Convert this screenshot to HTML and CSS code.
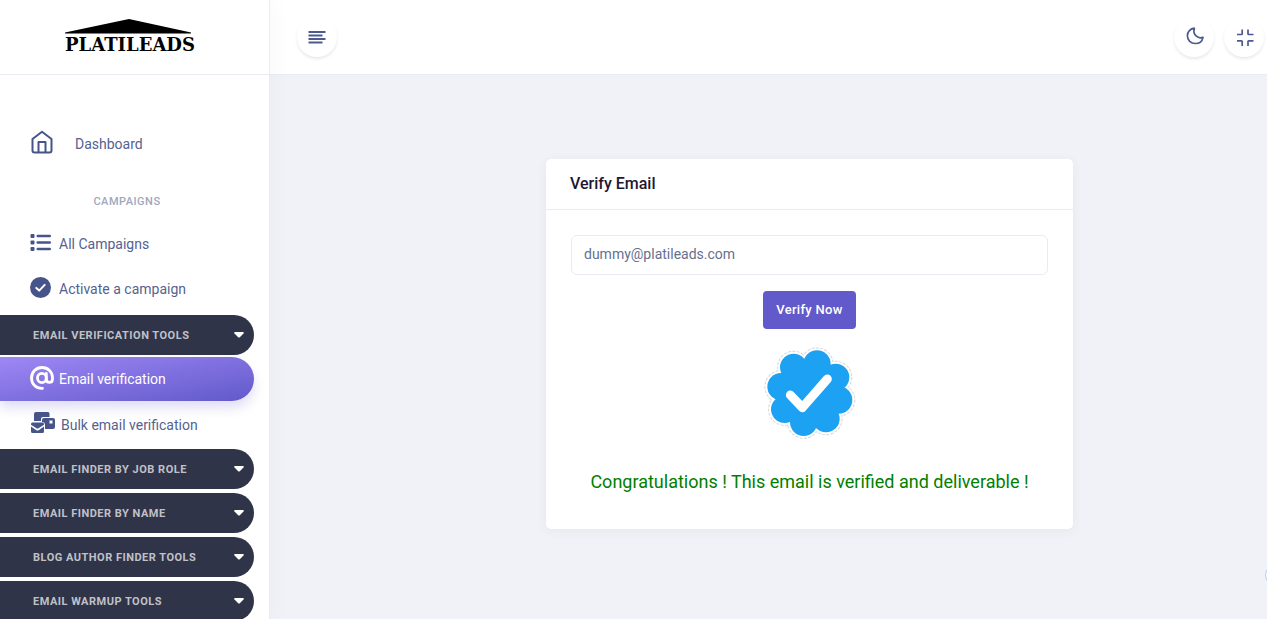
FILE: index.html
```html
<!DOCTYPE html>
<html lang="en">
<head>
<meta charset="utf-8">
<meta name="viewport" content="width=device-width, initial-scale=1">
<title>Platileads - Verify Email</title>
<link rel="stylesheet" href="styles.css">
</head>
<body>
<div class="app">
  <aside class="sidebar">
    <a class="brand" href="#">
      <svg class="brand-roof" viewBox="0 0 126 15" aria-hidden="true"><path d="M0 14.5V13.4L64 0L126 13.4V14.5Z"/></svg>
      <span class="brand-name">PLATILEADS</span>
    </a>
    <nav class="menu">
      <a class="item item-home" href="#">
        <svg class="icon-home" viewBox="0 0 24 24" fill="none" stroke="currentColor" stroke-width="2" stroke-linejoin="round"><path d="M2.500 9L12 1.800L21.500 9V20.500Q21.500 22.500 19.500 22.500H4.500Q2.500 22.500 2.500 20.500Z"/><path d="M8.500 22V12H15.500V22"/></svg>
        <span>Dashboard</span>
      </a>
      <h2 class="menu-title">CAMPAIGNS</h2>
      <a class="item" href="#">
        <svg class="icon-row" viewBox="0 0 21 21" fill="currentColor"><rect x="0.500" y="2" width="4" height="4" rx="1"/><rect x="0.500" y="8.500" width="4" height="4" rx="1"/><rect x="0.500" y="15" width="4" height="4" rx="1"/><rect x="6.500" y="2.800" width="14.500" height="2.400" rx="1.200"/><rect x="6.500" y="9.300" width="14.500" height="2.400" rx="1.200"/><rect x="6.500" y="15.800" width="14.500" height="2.400" rx="1.200"/></svg>
        <span>All Campaigns</span>
      </a>
      <a class="item" href="#">
        <svg class="icon-row" viewBox="0 0 21 21"><circle cx="10.500" cy="10.500" r="10.500" fill="currentColor"/><path d="M6.300 10.900L9.200 13.600L14.700 7.900" fill="none" stroke="#fff" stroke-width="2" stroke-linecap="round" stroke-linejoin="round"/></svg>
        <span>Activate a campaign</span>
      </a>
      <button class="group group-open" type="button"><span>EMAIL VERIFICATION TOOLS</span><svg class="caret" viewBox="0 0 10 6"><path d="M1 0H9Q10.300 .4 9.500 1.400L5.800 5.200Q5 6 4.200 5.200L.5 1.400Q-.3 .4 1 0Z"/></svg></button>
      <a class="item item-active" href="#">
        <svg class="icon-at" viewBox="0 0 24 24" fill="none" stroke="currentColor" stroke-width="2.800" stroke-linecap="round"><path d="M12.500 22.300C6 22.700 1.500 18 1.500 12S6 1.500 12 1.500S22.500 6 22.500 11.500V13C22.500 17.600 16.300 17.600 16.300 13V7.500"/><ellipse cx="11.900" cy="12" rx="4.400" ry="4.600"/></svg>
        <span>Email verification</span>
      </a>
      <a class="item item-bulk" href="#">
        <svg class="icon-mail" viewBox="0 0 24 22" fill="currentColor"><path d="M3 9V2Q3 0 5 0H17Q18.500 0 18.500 2V5H12Q10 5 10 7V9Z"/><path fill-rule="evenodd" d="M11 8Q11 6 13 6H22Q24 6 24 8V15Q24 17 22 17H14V13Q14 10 11 10ZM18.500 8.500V11.500H21.500V8.500Z"/><path d="M0 12Q0 10.500 1.500 10.500H11.500Q13 10.500 13 12V12.700L7.500 16.300Q6.500 17 5.500 16.300L0 12.700Z"/><path d="M0 14.600L5 18Q6.500 19 8 18L13 14.600V19.500Q13 21 11.500 21H1.500Q0 21 0 19.500Z"/></svg>
        <span>Bulk email verification</span>
      </a>
      <button class="group" type="button"><span>EMAIL FINDER BY JOB ROLE</span><svg class="caret" viewBox="0 0 10 6"><path d="M1 0H9Q10.300 .4 9.500 1.400L5.800 5.200Q5 6 4.200 5.200L.5 1.400Q-.3 .4 1 0Z"/></svg></button>
      <button class="group" type="button"><span>EMAIL FINDER BY NAME</span><svg class="caret" viewBox="0 0 10 6"><path d="M1 0H9Q10.300 .4 9.500 1.400L5.800 5.200Q5 6 4.200 5.200L.5 1.400Q-.3 .4 1 0Z"/></svg></button>
      <button class="group" type="button"><span>BLOG AUTHOR FINDER TOOLS</span><svg class="caret" viewBox="0 0 10 6"><path d="M1 0H9Q10.300 .4 9.500 1.400L5.800 5.200Q5 6 4.200 5.200L.5 1.400Q-.3 .4 1 0Z"/></svg></button>
      <button class="group" type="button"><span>EMAIL WARMUP TOOLS</span><svg class="caret" viewBox="0 0 10 6"><path d="M1 0H9Q10.300 .4 9.500 1.400L5.800 5.200Q5 6 4.200 5.200L.5 1.400Q-.3 .4 1 0Z"/></svg></button>
    </nav>
  </aside>

  <div class="page">
    <header class="topbar">
      <button class="round" type="button" aria-label="Toggle menu">
        <svg viewBox="0 0 24 24" fill="none" stroke="currentColor" stroke-width="1.800"><path d="M3.500 7H20.500M3.500 10.500H17.500M3.500 14H20.500M3.500 17.500H17.500"/></svg>
      </button>
      <div class="topbar-tools">
        <button class="round" type="button" aria-label="Dark mode">
          <svg viewBox="0 0 24 24" fill="none" stroke="currentColor" stroke-width="1.700" stroke-linejoin="round"><path d="M12.400 3.200C8.300 3.600 5.400 6.800 5.400 10.700C5.400 15.200 8.800 18.500 13.200 18.500C17.200 18.500 20.300 16 21 12.300C16.100 14.200 10.300 9.900 12.400 3.200Z"/></svg>
        </button>
        <button class="round" type="button" aria-label="Exit full screen">
          <svg viewBox="0 0 24 24" fill="none" stroke="currentColor" stroke-width="1.700"><path d="M5 9.500H9.500Q10.200 9.500 10.200 8.800V4.500M16 4.500V8.800Q16 9.500 16.700 9.500H21.500M5 15.800H9.500Q10.200 15.800 10.200 16.500V21M16 21V16.500Q16 15.800 16.700 15.800H21.500"/></svg>
        </button>
      </div>
    </header>

    <main class="content">
      <form class="card">
        <h1 class="card-title"><label for="email">Verify Email</label></h1>
        <div class="card-body">
          <input class="field" id="email" type="email" value="dummy@platileads.com">
          <button class="verify" type="button">Verify Now</button>
          <svg class="badge" viewBox="68 200 282 276" role="img" aria-label="Verified">
            <g fill="#fff" stroke="#dcdcdc" stroke-width="4" stroke-dasharray="9 4"><circle cx="160" cy="261" r="48"/><circle cx="230" cy="251" r="48"/><circle cx="286" cy="291" r="48"/><circle cx="295" cy="359" r="48"/><circle cx="257" cy="415" r="48"/><circle cx="190" cy="426" r="48"/><circle cx="133" cy="387" r="48"/><circle cx="122" cy="319" r="48"/></g>
            <g fill="#fff"><circle cx="160" cy="261" r="46"/><circle cx="230" cy="251" r="46"/><circle cx="286" cy="291" r="46"/><circle cx="295" cy="359" r="46"/><circle cx="257" cy="415" r="46"/><circle cx="190" cy="426" r="46"/><circle cx="133" cy="387" r="46"/><circle cx="122" cy="319" r="46"/></g>
            <g fill="#1da1f2"><circle cx="208" cy="339" r="80"/><circle cx="160" cy="261" r="41"/><circle cx="230" cy="251" r="41"/><circle cx="286" cy="291" r="41"/><circle cx="295" cy="359" r="41"/><circle cx="257" cy="415" r="41"/><circle cx="190" cy="426" r="41"/><circle cx="133" cy="387" r="41"/><circle cx="122" cy="319" r="41"/></g>
            <path d="M150 344L186 382L261 296" fill="none" stroke="#fff" stroke-width="27" stroke-linecap="round" stroke-linejoin="round"/>
          </svg>
          <p class="result">Congratulations ! This email is verified and deliverable !</p>
        </div>
      </form>
    </main>
  </div>
</div>
<div class="edge-tab" aria-hidden="true"></div>
</body>
</html>
```
FILE: styles.css
```css
* { box-sizing: border-box; }

body {
  margin: 0;
  font-family: Roboto, "Liberation Sans", sans-serif;
  font-size: 14px;
  color: #55628f;
  background: #f0f2f7;
}

a { color: inherit; text-decoration: none; }
button { font-family: inherit; cursor: pointer; }

.app {
  display: grid;
  grid-template-columns: 270px minmax(0, 1fr);
  height: 100vh;
  overflow: hidden;
}

/* Sidebar */
.sidebar {
  z-index: 1;
  min-height: 0;
  overflow: hidden;
  background: #fff;
  border-right: 1px solid #e9ebf2;
  box-shadow: 2px 0 24px rgba(60, 70, 120, 0.03);
}

.brand {
  display: flex;
  flex-direction: column;
  align-items: center;
  height: 75px;
  padding: 19px 13px 0 0;
  border-bottom: 1px solid #e9ebf2;
  color: #000;
}

.brand-roof { width: 126px; height: 15px; }

.brand-name {
  padding-left: 4px;
  font: bold 18px/22px "DejaVu Serif", serif;
}

.menu {
  display: flex;
  flex-direction: column;
  padding: 46px 15px 0 0;
}

.item {
  display: flex;
  align-items: center;
  gap: 8px;
  height: 44px;
  margin-bottom: 1px;
  padding-left: 30px;
}

.item span { padding-top: 2px; }
.item svg { flex: none; margin-bottom: 2px; color: #47548a; }
.item-home { gap: 21px; }
.icon-home { width: 24px; height: 24px; }
.icon-row { width: 21px; height: 21px; }
.icon-at { width: 24px; height: 24px; }
.icon-mail { width: 24px; height: 22px; }

.menu-title {
  margin: 26px 0 10px;
  font-size: 11px;
  line-height: 19px;
  font-weight: 500;
  letter-spacing: 0.5px;
  text-align: center;
  color: #a0a8bd;
}

.group {
  display: flex;
  align-items: center;
  justify-content: space-between;
  flex: none;
  height: 40px;
  margin: 4px 0 0;
  padding: 0 10px 0 33px;
  border: 0;
  border-radius: 0 20px 20px 0;
  background: #2f3448;
  color: #c0c1c8;
  font-size: 11px;
  font-weight: 700;
  letter-spacing: 0.5px;
}

.group-open { margin-bottom: 2px; }
.caret { width: 10px; height: 6px; fill: #fff; }

.item-active {
  gap: 5px;
  border-radius: 0 22px 22px 0;
  background: linear-gradient(to bottom right, #9e88f5, #6259ca);
  box-shadow: 0 7px 12px rgba(98, 89, 202, 0.2);
  color: #fff;
}

.item-active span { padding-top: 0; }
.item-active svg { color: #fff; }

.item-bulk {
  gap: 6px;
  height: 43px;
  margin-bottom: 0;
  padding-left: 31px;
}

/* Header */
.page { display: flex; flex-direction: column; min-width: 0; }

.topbar {
  display: flex;
  justify-content: space-between;
  align-items: center;
  height: 75px;
  padding: 0 3px 0 27px;
  background: #fff;
  border-bottom: 1px solid #e9ebf2;
}

.topbar-tools { display: flex; gap: 10px; }

.round {
  display: grid;
  place-items: center;
  width: 40px;
  height: 40px;
  padding: 0;
  border: 0;
  border-radius: 50%;
  background: #fff;
  box-shadow: 0 2px 3px rgba(40, 50, 90, 0.1);
  color: #4d5b8c;
}

.round svg { width: 24px; height: 24px; }

/* Verification card */
.content {
  display: grid;
  grid-template-columns: 276fr 527fr 194fr;
  padding-top: 84px;
}

.card {
  grid-column: 2;
  background: #fff;
  border-radius: 5px;
  box-shadow: 0 2px 12px rgba(60, 70, 120, 0.06);
}

.card-title {
  margin: 0;
  padding: 13px 24px;
  border-bottom: 1px solid #e9ebf2;
  font-size: 16px;
  line-height: 24px;
  font-weight: 500;
  color: #1d1735;
}

.card-body {
  display: flex;
  flex-direction: column;
  align-items: center;
  padding: 25px;
}

.field {
  width: 100%;
  height: 40px;
  padding: 0 12px 2px;
  border: 1px solid #e9ebf2;
  border-radius: 6px;
  background: #fff;
  color: #66708f;
  font: 14px Roboto, sans-serif;
}

.verify {
  height: 38px;
  margin: 16px 0 18px;
  padding: 0 13px 2px;
  border: 0;
  border-radius: 4px;
  background: #6259ca;
  color: #fff;
  font-size: 13px;
  font-weight: 500;
  letter-spacing: 0.3px;
}

.badge { width: 94px; height: 92px; }

.result {
  margin: 29px 0 9px;
  font-size: 18px;
  line-height: 27px;
  text-align: center;
  color: #008000;
}

/* Handle peeking in from the window edge */
.edge-tab {
  position: fixed;
  right: -20px;
  bottom: 33px;
  width: 22px;
  height: 22px;
  border: 1px solid #b5cdf8;
  border-radius: 50%;
  background: #fff;
}
```
